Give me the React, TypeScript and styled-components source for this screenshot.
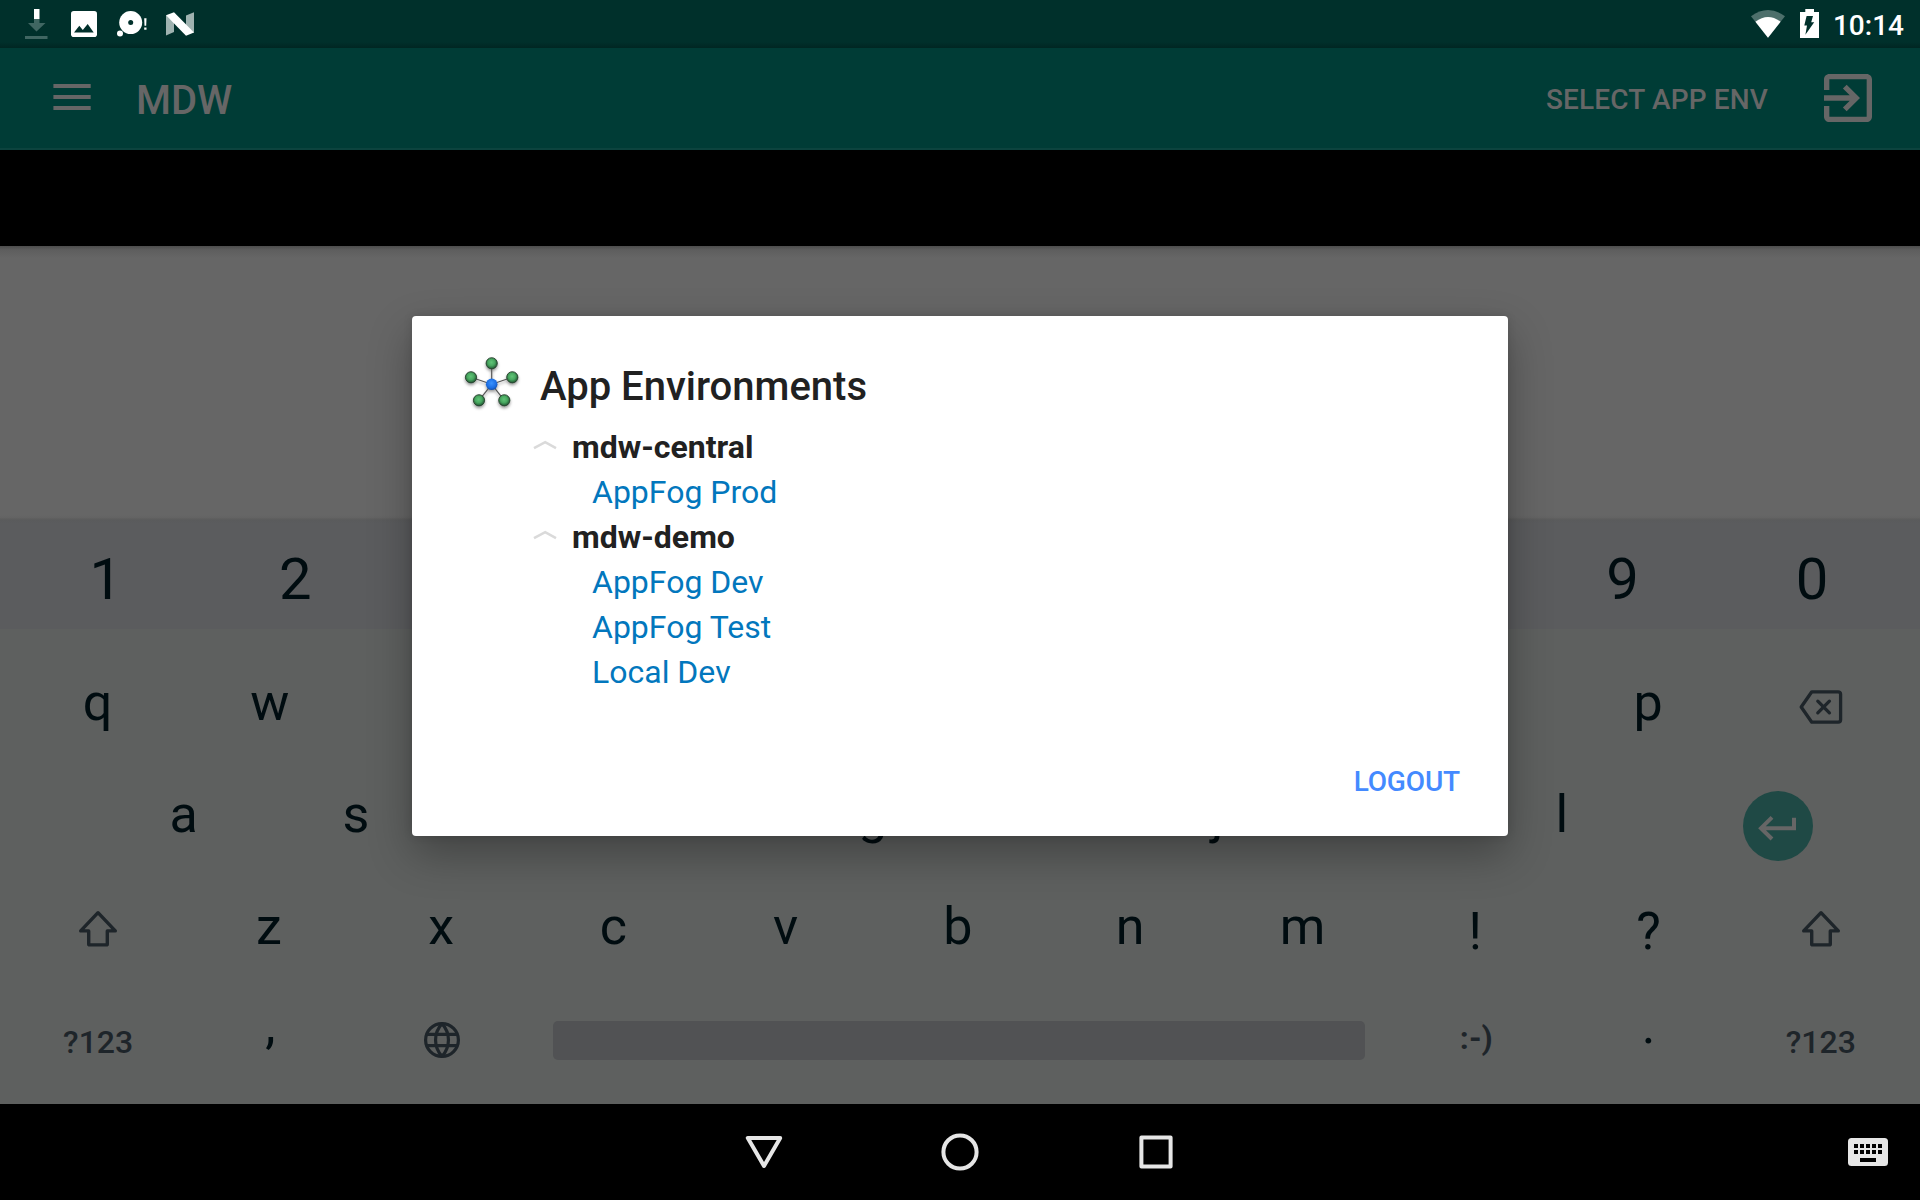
import React from "react";
import styled, { createGlobalStyle } from "styled-components";

const INK = "#000c10";
const MUTED = "#1e252a";
const DIM = "#666666";

const GlobalStyle = createGlobalStyle`
  * { box-sizing: border-box; }
  body { margin: 0; background: #000; font-family: Roboto, "Liberation Sans", sans-serif; }
  svg { display: block; flex: none; }
`;

const Screen = styled.div`
  position: relative;
  width: 1920px;
  height: 1200px;
  display: flex;
  flex-direction: column;
  overflow: hidden;
  background: ${DIM};
`;

const StatusBar = styled.header`
  height: 48px;
  flex: none;
  display: flex;
  justify-content: space-between;
  padding: 0 16px 0 24px;
  background: linear-gradient(#00302b 0 42px, #002622 48px);
  color: #fff;
`;

const StatusGroup = styled.div<{ $gap: number }>`
  display: flex;
  align-items: center;
  gap: ${(p) => p.$gap}px;
`;

const Clock = styled.time`
  font-size: 28px;
  font-weight: 500;
  line-height: 48px;
  padding-top: 3px;
  margin-left: -1px;
`;

const Toolbar = styled.div`
  height: 102px;
  flex: none;
  display: flex;
  align-items: center;
  padding: 0 40px 0 52px;
  background: #003c36;
  border-bottom: 2px solid #0c433e;
  color: ${DIM};
`;

const MenuButton = styled.span`
  margin-bottom: 2px;
`;

const ExitButton = styled.span`
  margin-bottom: 4px;
  padding-top: 3px;
`;

const AppTitle = styled.h1`
  margin: 6px 0 0 45px;
  flex: 1;
  font-size: 40px;
  line-height: 48px;
  font-weight: 500;
`;

const ToolbarAction = styled.span`
  margin: 4px 48px 0 0;
  font-size: 28px;
  line-height: 34px;
  font-weight: 500;
  letter-spacing: 0.15px;
`;

const TabStrip = styled.div`
  height: 96px;
  flex: none;
  background: #000;
`;

const Content = styled.main`
  flex: 1;
  background: linear-gradient(#4c4c4c, #5e5e5e 4px, #666 12px, #666 calc(100% - 3px), #636363);
`;

const DigitRow = styled.div`
  height: 111px;
  flex: none;
  display: flex;
  padding: 0 13px 0 11px;
  background: linear-gradient(#616161, #5a5b5c 2px, #5b5c5e 5px);
`;

const Keyboard = styled.section`
  height: 475px;
  flex: none;
  padding: 21px 13px 0 12px;
  background: #5e605f;
`;

const KeyRow = styled.div<{ $inset?: number }>`
  height: 112px;
  display: flex;
  padding-left: ${(p) => p.$inset ?? 0}px;
`;

const Key = styled.div<{ $span?: number }>`
  flex: ${(p) => p.$span ?? 1} 1 0;
  min-width: 0;
  display: flex;
  align-items: center;
  justify-content: center;
`;

const KeyLabel = styled.span<{ $size?: number; $lift?: number; $pull?: number; $weight?: number; $muted?: boolean }>`
  font-size: ${(p) => p.$size ?? 52}px;
  line-height: 60px;
  font-weight: ${(p) => p.$weight ?? (p.$muted ? 500 : 400)};
  color: ${(p) => (p.$muted ? MUTED : INK)};
  margin-bottom: ${(p) => (p.$lift ?? 3.5) * 2}px;
  margin-right: ${(p) => (p.$pull ?? 0) * 2}px;
`;

const KeyIcon = styled.span<{ $lift?: number; $pull?: number }>`
  margin-bottom: ${(p) => (p.$lift ?? 0) * 2}px;
  margin-right: ${(p) => (p.$pull ?? 0) * 2}px;
`;

const EnterKey = styled.span`
  width: 70px;
  height: 70px;
  margin-top: 16px;
  padding-top: 3px;
  display: flex;
  align-items: center;
  justify-content: center;
  border-radius: 50%;
  background: #1f4945;
`;

const SpaceBar = styled.span`
  width: 812px;
  height: 39px;
  margin-bottom: 3px;
  border-radius: 5px;
  background: #515254;
`;

const NavBar = styled.nav`
  height: 96px;
  flex: none;
  display: grid;
  grid-template-columns: 1fr 196px 196px 196px 1fr;
  align-items: center;
  justify-items: center;
  background: #000;
`;

const NavEnd = styled.div`
  grid-column: 5;
  justify-self: end;
  padding-right: 32px;
`;

const DialogLayer = styled.div`
  position: absolute;
  inset: 48px 0 96px;
  display: flex;
  align-items: center;
  justify-content: center;
`;

const Dialog = styled.div`
  width: 1096px;
  height: 520px;
  display: flex;
  flex-direction: column;
  padding: 38px 48px 34px;
  border-radius: 4px;
  background: #fff;
  color: #212121;
  box-shadow: 0 18px 44px rgba(0, 0, 0, 0.3), 0 0 10px rgba(0, 0, 0, 0.12);
`;

const DialogHeader = styled.div`
  height: 66px;
  display: flex;
`;

const DialogTitle = styled.h2`
  margin: 9px 0 0 16px;
  font-size: 40px;
  line-height: 48px;
  font-weight: 500;
`;

const EnvTree = styled.div`
  padding: 4px 0 0 73px;
  flex: 1;
`;

const EnvGroup = styled.div`
  height: 45px;
  display: flex;
  align-items: center;
  gap: 15px;
  font-size: 32px;
  font-weight: 700;
`;

const Chevron = styled.span`
  margin-bottom: 2px;
`;

const EnvLink = styled.a`
  height: 45px;
  display: flex;
  align-items: center;
  padding-left: 59px;
  font-size: 32px;
  color: #0277bd;
`;

const DialogActions = styled.div`
  display: flex;
  justify-content: flex-end;
  font-size: 28px;
  line-height: 40px;
  font-weight: 500;
  letter-spacing: -0.15px;
  color: #448aff;
`;

const DownloadIcon = () => (
  <svg width="27" height="48" viewBox="24 0 27 48">
    <path d="M34 9h5.5v10H34z" fill="#fff" />
    <path d="M34 19h5.5v4h6l-9 8.5-8.5-8.5h6zM25 36h22.5v3H25z" fill="#406662" />
  </svg>
);

const ImageIcon = () => (
  <svg width="26" height="48" viewBox="71 0 26 48">
    <rect x="71" y="11" width="26" height="26" rx="2.8" fill="#fff" />
    <path d="M74 32.6l5.3-6.8 3.5 4.3 4.9-6.1 6 8.6z" fill="#00302b" />
  </svg>
);

const DiscIcon = () => (
  <svg width="29" height="48" viewBox="117 0 29 48" overflow="visible">
    <circle cx="130.7" cy="22.6" r="11.5" fill="#fff" />
    <circle cx="130.7" cy="22.6" r="2.5" fill="#00302b" />
    <circle cx="120" cy="33.4" r="3" fill="#fff" />
    <path d="M144.2 18.3h2.3l-.3 7.4h-1.7zM144.2 27.5h2.3v2.3h-2.3z" fill="#fff" />
  </svg>
);

const NIcon = () => (
  <svg width="28" height="48" viewBox="166 0 28 48">
    <path d="M166 15v20.4l8-3.3V22zM194 12.3l-8 3.2V26l8 7z" fill="#9fb2b0" />
    <path d="M166 15.2l8-3 20 20.3-8 3.3z" fill="#fff" />
  </svg>
);

const WifiIcon = () => (
  <svg width="34" height="48" viewBox="1751 0 34 48">
    <path d="M1751 16.2Q1768 3.8 1785 16.2L1768 37.8z" fill="#4d6f6b" />
    <path d="M1755.4 21.8Q1768 12.4 1780.6 21.8L1768 37.8z" fill="#fff" />
  </svg>
);

const BatteryIcon = () => (
  <svg width="19" height="48" viewBox="1800 0 19 48">
    <path d="M1805.3 9h8.7v3h5v26h-19V12h5.3z" fill="#fff" />
    <path d="M1806.6 16h6.4l-1.8 6.2h3l-8.8 12.6 1.6-9.4h-2.7z" fill="#00302b" />
  </svg>
);

const MenuIcon = () => (
  <svg width="39" height="26" viewBox="52 84 39 26">
    <path d="M53.4 84h37.3v4H53.4zM53.4 95h37.3v4H53.4zM53.4 106h37.3v4H53.4z" fill={DIM} />
  </svg>
);

const ExitIcon = () => (
  <svg width="64" height="64" viewBox="0 0 24 24" fill={DIM}>
    <path d="M10.09 15.59L11.5 17l5-5-5-5-1.41 1.41L12.67 11H3v2h9.67l-2.58 2.59zM19 3H5c-1.11 0-2 .9-2 2v4h2V5h14v14H5v-4H3v4c0 1.1.89 2 2 2h14c1.1 0 2-.9 2-2V5c0-1.1-.9-2-2-2z" />
  </svg>
);

const BackspaceIcon = () => (
  <svg width="44" height="36" viewBox="0 0 44 36" fill="none" stroke={MUTED} strokeWidth="3.3" strokeLinejoin="round" strokeLinecap="round">
    <path d="M12.8 2.8H39.2a2.4 2.4 0 0 1 2.4 2.4V30.8a2.4 2.4 0 0 1-2.4 2.4H12.8L2.2 18z" />
    <path d="M18.8 12.2l11.6 11.6M30.4 12.2L18.8 23.8" />
  </svg>
);

const ShiftIcon = () => (
  <svg width="40" height="38" viewBox="0 0 40 38" fill="none" stroke={MUTED} strokeWidth="3.4" strokeLinejoin="round">
    <path d="M20 2.7L2.7 20.9H10.7V33.9a1 1 0 0 0 1 1H28.3a1 1 0 0 0 1-1V20.9H37.3z" />
  </svg>
);

const GlobeIcon = () => (
  <svg width="38" height="38" viewBox="-19 -19 38 38" fill="none" stroke={MUTED} strokeWidth="3.2">
    <circle r="16.4" />
    <path d="M-15.4-5.6H15.4M-15.4 5.6H15.4M0-16.4C-8.6-7-8.6 7 0 16.4M0-16.4C8.6-7 8.6 7 0 16.4" />
  </svg>
);

const EnterIcon = () => (
  <svg width="40" height="30" viewBox="1758 813 40 30" fill="none" stroke={DIM} strokeWidth="4">
    <path d="M1794 817.7V828.2H1761M1772 817.3L1761 828.2 1772 839" />
  </svg>
);

const BackIcon = () => (
  <svg width="40" height="40" viewBox="-20 -20 40 40" fill="none" stroke="#e6e6e6" strokeWidth="4" strokeLinejoin="round">
    <path d="M-16.2-14H16.2L0 14z" />
  </svg>
);

const HomeIcon = () => (
  <svg width="40" height="40" viewBox="-20 -20 40 40" fill="none" stroke="#e6e6e6" strokeWidth="4">
    <circle r="16.6" />
  </svg>
);

const RecentsIcon = () => (
  <svg width="40" height="40" viewBox="-20 -20 40 40" fill="none" stroke="#e6e6e6" strokeWidth="4" strokeLinejoin="round">
    <rect x="-14.6" y="-14.6" width="29.2" height="29.2" />
  </svg>
);

const keySlots = [6, 12, 18, 24, 30];
const KeyboardIcon = () => (
  <svg width="40" height="28" viewBox="0 0 40 28">
    <rect width="40" height="28" rx="3.5" fill="#e6e6e6" />
    {keySlots.map((x) => (
      <path key={x} d={`M${x} 6h4v4h-4zM${x} 12h4v4h-4z`} fill="#000" />
    ))}
    <path d="M12 20h16v4H12z" fill="#000" />
  </svg>
);

const outerNodes = [
  [36.7, 9.3],
  [16, 23.3],
  [57.3, 23.3],
  [24, 46.3],
  [49.3, 46.3],
];
const LogoIcon = () => (
  <svg width="64" height="64" viewBox="5 0 64 64">
    <defs>
      <radialGradient id="green" cx="47%" cy="42%" r="60%">
        <stop offset="0" stopColor="#62c478" />
        <stop offset="0.5" stopColor="#48a860" />
        <stop offset="1" stopColor="#1c4a2c" />
      </radialGradient>
      <radialGradient id="blue" cx="48%" cy="40%" r="62%">
        <stop offset="0" stopColor="#3a92ff" />
        <stop offset="0.65" stopColor="#1c6ee4" />
        <stop offset="1" stopColor="#144a9c" />
      </radialGradient>
      <filter id="soft" x="-20%" y="-20%" width="140%" height="150%">
        <feDropShadow dx="0" dy="2" stdDeviation="1.6" floodColor="#000" floodOpacity="0.4" />
      </filter>
    </defs>
    <g filter="url(#soft)">
      {outerNodes.map(([x, y]) => (
        <path key={x} d={`M36.7 30.3L${x} ${y}`} stroke="#555" strokeWidth="1.2" />
      ))}
      {outerNodes.map(([x, y]) => (
        <circle key={x} cx={x} cy={y} r="5.6" fill="url(#green)" stroke="#26402d" strokeWidth="0.9" />
      ))}
      <circle cx="36.7" cy="30.3" r="5.8" fill="url(#blue)" />
    </g>
  </svg>
);

const ChevronIcon = () => (
  <svg width="24" height="12" viewBox="0 0 24 12" fill="none" stroke="#dadada" strokeWidth="2.6">
    <path d="M1 8.2L12.2 2.2 23 8.2" />
  </svg>
);

const environments = [
  { name: "mdw-central", apps: ["AppFog Prod"] },
  { name: "mdw-demo", apps: ["AppFog Dev", "AppFog Test", "Local Dev"] },
];

const letters = (row: string, pull: number) =>
  row.split("").map((c) => (
    <Key key={c}>
      <KeyLabel $pull={pull}>{c}</KeyLabel>
    </Key>
  ));

export default function App() {
  return (
    <Screen>
      <GlobalStyle />
      <StatusBar>
        <StatusGroup $gap={20}>
          <DownloadIcon />
          <ImageIcon />
          <DiscIcon />
          <NIcon />
        </StatusGroup>
        <StatusGroup $gap={15}>
          <WifiIcon />
          <BatteryIcon />
          <Clock>10:14</Clock>
        </StatusGroup>
      </StatusBar>
      <Toolbar>
        <MenuButton><MenuIcon /></MenuButton>
        <AppTitle>MDW</AppTitle>
        <ToolbarAction>SELECT APP ENV</ToolbarAction>
        <ExitButton><ExitIcon /></ExitButton>
      </Toolbar>
      <TabStrip />
      <Content />
      <DigitRow>
        {"1234567890".split("").map((d) => (
          <Key key={d}>
            <KeyLabel $size={58} $lift={-5}>{d}</KeyLabel>
          </Key>
        ))}
      </DigitRow>
      <Keyboard>
        <KeyRow>
          {letters("qwertyuiop", 0.5)}
          <Key>
            <KeyIcon $lift={-0.5}><BackspaceIcon /></KeyIcon>
          </Key>
        </KeyRow>
        <KeyRow $inset={86}>
          {letters("asdfghjkl", 0.5)}
          <Key $span={1.5}>
            <EnterKey><EnterIcon /></EnterKey>
          </Key>
        </KeyRow>
        <KeyRow>
          <Key>
            <KeyIcon $lift={1}><ShiftIcon /></KeyIcon>
          </Key>
          {letters("zxcvbnm", 1.5)}
          <Key><KeyLabel $lift={-1.5} $pull={1}>!</KeyLabel></Key>
          <Key><KeyLabel $lift={-1.5}>?</KeyLabel></Key>
          <Key>
            <KeyIcon $lift={1}><ShiftIcon /></KeyIcon>
          </Key>
        </KeyRow>
        <KeyRow>
          <Key><KeyLabel $muted $size={32} $lift={0}>?123</KeyLabel></Key>
          <Key><KeyLabel $lift={16}>,</KeyLabel></Key>
          <Key>
            <KeyIcon $lift={2} $pull={1}><GlobeIcon /></KeyIcon>
          </Key>
          <Key $span={5}><SpaceBar /></Key>
          <Key><KeyLabel $muted $size={32} $weight={700} $lift={4}>:-)</KeyLabel></Key>
          <Key><KeyLabel $lift={16}>.</KeyLabel></Key>
          <Key><KeyLabel $muted $size={32} $lift={0}>?123</KeyLabel></Key>
        </KeyRow>
      </Keyboard>
      <NavBar>
        <span />
        <BackIcon />
        <HomeIcon />
        <RecentsIcon />
        <NavEnd><KeyboardIcon /></NavEnd>
      </NavBar>
      <DialogLayer>
        <Dialog role="dialog">
          <DialogHeader>
            <LogoIcon />
            <DialogTitle>App Environments</DialogTitle>
          </DialogHeader>
          <EnvTree>
            {environments.map((group) => (
              <React.Fragment key={group.name}>
                <EnvGroup>
                  <Chevron><ChevronIcon /></Chevron>
                  {group.name}
                </EnvGroup>
                {group.apps.map((app) => (
                  <EnvLink key={app}>{app}</EnvLink>
                ))}
              </React.Fragment>
            ))}
          </EnvTree>
          <DialogActions>LOGOUT</DialogActions>
        </Dialog>
      </DialogLayer>
    </Screen>
  );
}
